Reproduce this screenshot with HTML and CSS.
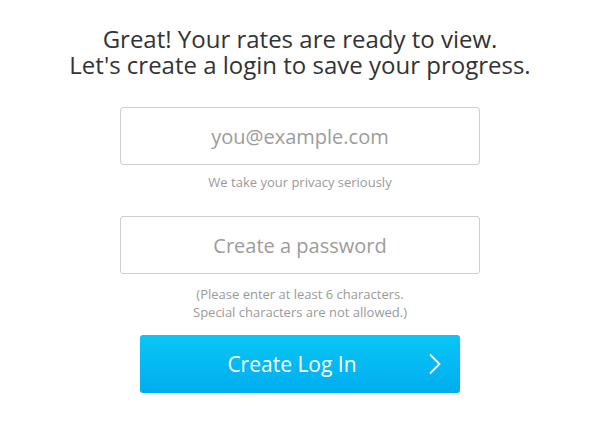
FILE: index.html
```html
<!DOCTYPE html>
<html lang="en">
<head>
    <meta charset="UTF-8">
    <meta name="viewport" content="width=device-width, initial-scale=1.0">
    <link rel="stylesheet" href="styles.css">
</head>
<body>
    <h1>Great! Your rates are ready to view.<br>Let's create a login to save your progress.</h1>

    <form class="login-form">
        <input type="email" class="field" placeholder="you@example.com">
        <p class="note">We take your privacy seriously</p>

        <input type="password" class="field field-password" placeholder="Create a password">
        <p class="note note-password">(Please enter at least 6 characters.<br>Special characters are not allowed.)</p>

        <button type="button" class="submit">
            <span>Create Log In</span>
            <svg class="chevron" width="14" height="22" viewBox="0 0 14 22">
                <path d="M2 1.5 L11.5 11 L2 20.5" fill="none" stroke="#fff" stroke-width="1.8"/>
            </svg>
        </button>
    </form>
</body>
</html>
```

FILE: styles.css
```css
body {
    margin: 0;
    font-family: "Open Sans", Arial, sans-serif;
    background-color: #fff;
    color: #333;
    text-align: center;
}

h1 {
    margin: 0;
    padding-top: 26px;
    font-size: 24px;
    line-height: 26px;
    font-weight: normal;
    color: #333;
}

.login-form {
    width: 360px;
    margin: 0 auto;
    padding-top: 29px;
    display: flex;
    flex-direction: column;
    align-items: center;
}

.field {
    box-sizing: border-box;
    width: 360px;
    height: 58px;
    margin: 0;
    border: 1px solid #cfcfcf;
    border-radius: 3px;
    background: #fff;
    font-family: "Open Sans", Arial, sans-serif;
    font-size: 20px;
    color: #555;
    text-align: center;
    outline: none;
}

.field::placeholder {
    color: #9c9c9c;
}

.note {
    margin: 9px 0 25px;
    font-size: 13px;
    line-height: 17px;
    color: #9a9a9a;
}

.note-password {
    margin: 11px 0 14px;
    line-height: 18px;
}

.submit {
    position: relative;
    box-sizing: border-box;
    width: 320px;
    height: 58px;
    padding: 0 16px 0 0;
    border: none;
    border-radius: 3px;
    background: linear-gradient(#0ac6f5, #00adef);
    color: #fff;
    font-family: "Open Sans", Arial, sans-serif;
    font-size: 21px;
    cursor: pointer;
}

.chevron {
    position: absolute;
    right: 18px;
    top: 18px;
}
```
